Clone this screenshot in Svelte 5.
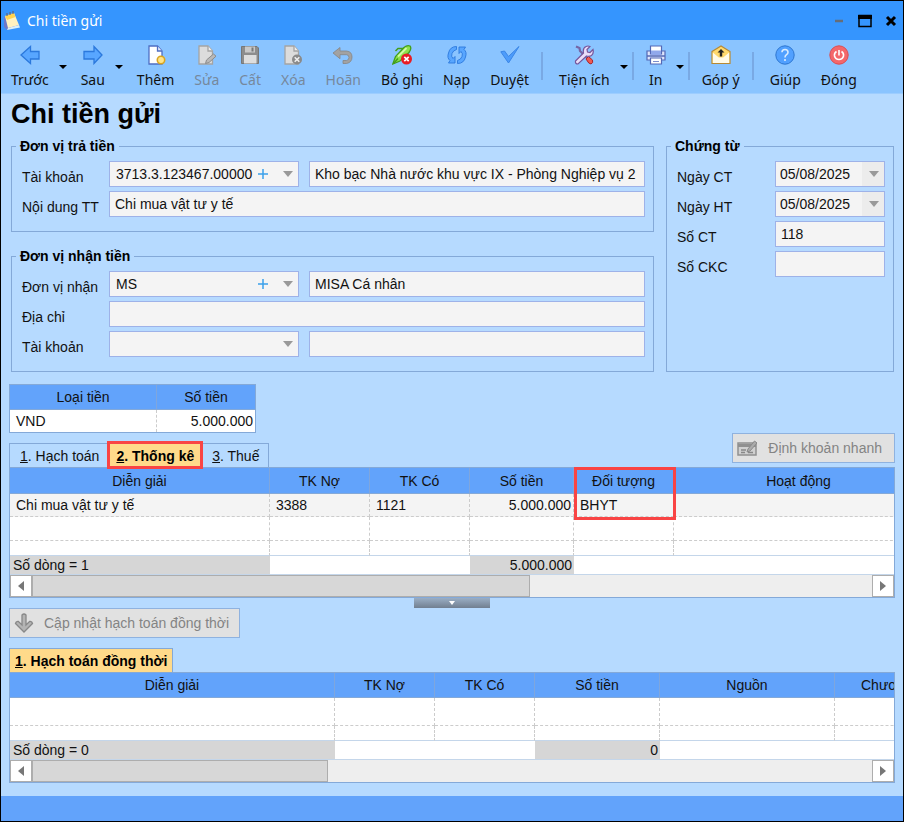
<script>
  const tools = [
    { icon: 'back', label: 'Trước', menu: true },
    { icon: 'forward', label: 'Sau', menu: true },
    { icon: 'add', label: 'Thêm' },
    { icon: 'edit', label: 'Sửa', disabled: true },
    { icon: 'save', label: 'Cất', disabled: true },
    { icon: 'remove', label: 'Xóa', disabled: true },
    { icon: 'undo', label: 'Hoãn', disabled: true },
    { icon: 'unpost', label: 'Bỏ ghi' },
    { icon: 'reload', label: 'Nạp' },
    { icon: 'approve', label: 'Duyệt', split: true },
    { icon: 'utility', label: 'Tiện ích', menu: true, split: true },
    { icon: 'print', label: 'In', menu: true, split: true },
    { icon: 'feedback', label: 'Góp ý', split: true },
    { icon: 'help', label: 'Giúp' },
    { icon: 'close', label: 'Đóng' }
  ];
</script>

{#snippet icon(name)}
  <svg class="icon" viewBox="0 0 20 20" width="20" height="20" aria-hidden="true">
    {#if name === 'back'}
      <path d="M1 10 10.5 1.5V6.500H19V14H10.500V18.500Z" fill="#58a6ff" stroke="#2b78dc" stroke-width="1.300" />
    {:else if name === 'forward'}
      <path d="M19 10 11 1.500V6.500H1V14H11V18.500Z" fill="#58a6ff" stroke="#2b78dc" stroke-width="1.300" />
    {:else if name === 'add'}
      <path d="M3 1h8.500L16 6v13H3Z" fill="#fff" stroke="#4f6fc4" stroke-width="1.300" />
      <path d="M11.500 1v5H16" fill="#e3ebff" stroke="#4f6fc4" stroke-width="1.300" />
      <circle cx="15" cy="15" r="3.700" fill="#ffe58a" stroke="#d9a520" stroke-width="1.600" />
    {:else if name === 'edit'}
      <path d="M2 1h9l4.500 5v13H2Z" fill="#dcdcdc" stroke="#a4a4a4" stroke-width="1.300" />
      <path d="M11 1v5h4.500" fill="#eee" stroke="#a4a4a4" stroke-width="1.300" />
      <path d="m8.500 18.500 1-3.500 7-6 2.500 2.200-7 6.300Z" fill="#b9b9b9" stroke="#8b8b8b" />
    {:else if name === 'save'}
      <path d="M1.500 1.500H17l1.500 1.500V18.500H1.500Z" fill="#8d8d8d" stroke="#777" />
      <path d="M5 1.500h10v6H5Z" fill="#c9c9c9" />
      <path d="M11.500 2.500h2v4h-2Z" fill="#777" />
      <path d="M4 10h12.500v8.500H4Z" fill="#dedede" />
    {:else if name === 'remove'}
      <path d="M2 1h9l4.500 5v13H2Z" fill="#dcdcdc" stroke="#a4a4a4" stroke-width="1.300" />
      <path d="M11 1v5h4.500" fill="#eee" stroke="#a4a4a4" stroke-width="1.300" />
      <circle cx="14" cy="14.500" r="5" fill="#8a8a8a" />
      <path d="m11.700 12.200 4.600 4.600m0-4.600-4.600 4.600" stroke="#eee" stroke-width="1.600" />
    {:else if name === 'undo'}
      <path d="M0 8 7 2.500v3.500h6.500q5.500.5 5.500 6t-5.500 6.500H10v-3h3.500q2.500-.5 2.500-3t-2.500-2.800H7v4Z" fill="#a2a2a2" stroke="#858585" stroke-width=".8" />
    {:else if name === 'unpost'}
      <path d="M.8 19 3.500 11.500 12 2.500Q15 0 18 1 20 3.500 17 7.500L8 16Z" fill="#8ee24c" stroke="#429e1a" stroke-width="1.300" />
      <path d="M11 3.500H6L3.500 6M1.500 18.500 6 13.500" fill="none" stroke="#429e1a" stroke-width="1.500" />
      <path d="m6 11.500 8.500-8.500" stroke="#d0f9a5" stroke-width="1.800" />
      <circle cx="14.500" cy="14" r="5.500" fill="#e81c24" />
      <path d="m12.300 11.800 4.400 4.400m0-4.400-4.400 4.400" stroke="#fff" stroke-width="1.700" />
    {:else if name === 'reload'}
      <path id="half" d="M9.500 1.500Q3 1.500 1.500 8-.2 13 3 15.500L1.500 18H8V11.500L6 13.500Q3.800 11.500 5 8.500 6 5.500 9.500 4.500Z" fill="#58a6ff" stroke="#2b78dc" stroke-width=".9" />
      <path d="M9.500 1.500Q3 1.500 1.500 8-.2 13 3 15.500L1.500 18H8V11.500L6 13.500Q3.800 11.500 5 8.500 6 5.500 9.500 4.500Z" transform="rotate(180 10 10)" fill="#58a6ff" stroke="#2b78dc" stroke-width=".9" />
    {:else if name === 'approve'}
      <path d="M.8 6.800 4.500 6 8.500 11.500 19 1.500 8.500 18Z" fill="#4d9cfb" stroke="#3a86e6" />
    {:else if name === 'utility'}
      <path d="m2 1.500 3.500 1.500.5 3 7 7" fill="none" stroke="#7565a5" stroke-width="2.200" />
      <path d="m12 14 2.500-2.500 4 3.500q1 3-1.500 4-2 .5-5-5Z" fill="#ed5a52" stroke="#a62630" />
      <path d="m1.500 16 8-8Q8.500 3 12 1.500q2-1 4 0l-3 3 .5 2.500 2.500.5 3-3q1 4-1.500 6-2.500 1.500-5 .5L4 19q-3 0-2.500-3Z" fill="#e9ddf8" stroke="#75569c" stroke-width="1.200" />
    {:else if name === 'print'}
      <path d="M1 6h18v9H1Z" fill="#dfe5fb" stroke="#5468b5" stroke-width="1.200" />
      <path d="M4.500 1h11v8h-11Z" fill="#fff" stroke="#5468b5" stroke-width="1.200" />
      <path d="M5 5.500h10V10H5Z" fill="#91a8eb" />
      <path d="M1 11h18" stroke="#5468b5" stroke-width="1.500" />
      <path d="M4.500 13h11v6h-11Z" fill="#fff" stroke="#5468b5" stroke-width="1.200" />
      <path d="M7 16.500h6" stroke="#7d8dcc" />
    {:else if name === 'feedback'}
      <path d="M1 6.500 10 1l9 5.500v12H1Z" fill="#ffd96d" stroke="#b78a35" stroke-width="1.200" />
      <path d="m1.800 7.500 6 5h4.400l6-5v10.400H1.800Z" fill="#fffbe9" />
      <path d="M10 4 6.500 7.500h2.300v4h2.400v-4h2.300Z" fill="#222" />
    {:else if name === 'help'}
      <circle cx="10" cy="10" r="9.200" fill="#51a0ff" stroke="#2e76d0" />
      <path d="M7 7.300Q7 4.500 10 4.500t3 2.700q0 1.500-1.500 2.500T10 12.500m0 1.500v2" fill="none" stroke="#d9ecff" stroke-width="1.600" />
    {:else if name === 'close'}
      <circle cx="10" cy="10" r="9.200" fill="#f4676b" stroke="#dc4b50" />
      <path d="M7.500 6.500q-2.500 1.500-2 4.500Q6.500 14.500 10 14.500t4.500-3.500q.5-3-2-4.500M10 5v5.500" fill="none" stroke="#fff" stroke-width="1.600" />
    {/if}
  </svg>
{/snippet}

{#snippet scroll(size)}
  <div class="scroll">
    <button class="step" type="button" aria-label="Cuộn trái"><svg viewBox="0 0 6 10" width="6" height="10"><path d="M6 0v10L0 5Z" /></svg></button>
    <div class="track"><div class="thumb" style:width="{size}%"></div></div>
    <button class="step" type="button" aria-label="Cuộn phải"><svg viewBox="0 0 6 10" width="6" height="10"><path d="M0 0v10l6-5Z" /></svg></button>
  </div>
{/snippet}

{#snippet combo(id, value, plus)}
  <div class="combo">
    <select {id}><option>{value}</option></select>
    {#if plus}
      <button class="plus" type="button" aria-label="Thêm mới">
        <svg viewBox="0 0 10 10" width="10" height="10"><path d="M5 0v10M0 5h10" stroke="#3aa0ea" stroke-width="1.500" /></svg>
      </button>
    {/if}
    <svg class="arrow" viewBox="0 0 10 6" width="10" height="6"><path d="M0 0h10L5 6Z" /></svg>
  </div>
{/snippet}

<div class="window">
  <header class="titlebar">
    <svg viewBox="0 0 18 20" width="18" height="20" aria-hidden="true">
      <path d="M1 6 10 2l6 14-12 3-3-3Z" fill="#6c78c8" />
      <path d="m2 5 9-3 5 12-11 3Z" fill="#fff2c0" />
      <path d="m2 5 9-3 1.500 4L4 9Z" fill="#ffd351" />
      <path d="m5 17 11-3 1 2.500L4 19Z" fill="#d9f1fa" />
      <path d="M4 5V2m3 2V1m3 2V0" stroke="#5d667c" stroke-width="1.200" />
    </svg>
    <span>Chi tiền gửi</span>
    <div class="controls">
      <button type="button" aria-label="Thu nhỏ"><svg viewBox="0 0 14 14" width="14" height="14"><path d="M3 7h8" stroke="#666d78" stroke-width="2.500" /></svg></button>
      <button type="button" aria-label="Phóng to"><svg viewBox="0 0 14 14" width="14" height="14"><path d="M1 1.500h12v11H1Z" fill="none" stroke="#000" stroke-width="1.500" /><path d="M0 1h14v4H0Z" /></svg></button>
      <button type="button" aria-label="Đóng cửa sổ"><svg viewBox="0 0 14 14" width="14" height="14"><path d="m3 3 8 8m0-8-8 8" stroke="#000" stroke-width="3" /></svg></button>
    </div>
  </header>

  <nav class="toolbar">
    {#each tools as tool}
      <button class="tool" type="button" disabled={tool.disabled}>
        {@render icon(tool.icon)}
        <span>{tool.label}</span>
      </button>
      {#if tool.menu}
        <button class="more" type="button" aria-label="Mở danh sách {tool.label}"><svg viewBox="0 0 8 4" width="8" height="4"><path d="M0 0h8L4 4Z" /></svg></button>
      {/if}
      {#if tool.split}<i class="sep"></i>{/if}
    {/each}
  </nav>

  <main>
    <h1>Chi tiền gửi</h1>

    <div class="forms">
      <div class="parties">
        <fieldset>
          <legend>Đơn vị trả tiền</legend>
          <div class="row">
            <label for="payer">Tài khoản</label>
            {@render combo('payer', '3713.3.123467.00000', true)}
            <input aria-label="Tên kho bạc" value="Kho bạc Nhà nước khu vực IX - Phòng Nghiệp vụ 2" />
          </div>
          <div class="row">
            <label for="content">Nội dung TT</label>
            <input id="content" value="Chi mua vật tư y tế" />
          </div>
        </fieldset>
        <fieldset>
          <legend>Đơn vị nhận tiền</legend>
          <div class="row">
            <label for="payee">Đơn vị nhận</label>
            {@render combo('payee', 'MS', true)}
            <input aria-label="Tên đơn vị nhận" value="MISA Cá nhân" />
          </div>
          <div class="row">
            <label for="address">Địa chỉ</label>
            <input id="address" />
          </div>
          <div class="row">
            <label for="account">Tài khoản</label>
            {@render combo('account', '', false)}
            <input aria-label="Tên ngân hàng" />
          </div>
        </fieldset>
      </div>
      <fieldset class="voucher">
        <legend>Chứng từ</legend>
        <div class="row"><label for="docdate">Ngày CT</label>{@render combo('docdate', '05/08/2025', false)}</div>
        <div class="row"><label for="postdate">Ngày HT</label>{@render combo('postdate', '05/08/2025', false)}</div>
        <div class="row"><label for="docno">Số CT</label><input id="docno" value="118" /></div>
        <div class="row"><label for="ckc">Số CKC</label><input id="ckc" /></div>
      </fieldset>
    </div>

    <div class="grid currency">
      <table>
        <colgroup><col style:width="60%" /><col /></colgroup>
        <thead><tr><th>Loại tiền</th><th>Số tiền</th></tr></thead>
        <tbody><tr><td>VND</td><td class="num">5.000.000</td></tr></tbody>
      </table>
    </div>

    <div class="tabrow">
      <div class="tabs" role="tablist">
        <button role="tab" type="button" aria-selected="false"><u>1</u>. Hạch toán</button>
        <button role="tab" type="button" aria-selected="true" class="active marked"><u>2</u>. Thống kê</button>
        <button role="tab" type="button" aria-selected="false"><u>3</u>. Thuế</button>
      </div>
      <button class="action" type="button" disabled>
        <svg viewBox="0 0 20 18" width="20" height="18" aria-hidden="true">
          <path d="M1 4h18v12H1Z" fill="#d0d0d0" stroke="#909090" stroke-width="1.500" />
          <path d="M1 5h18v3H1Z" fill="#909090" />
          <path d="M4 11h5M4 13.500h4M11 13.500h5" stroke="#888" stroke-width="1.500" />
          <path d="m10 13 1-3 6.500-8L20 4l-7 8Z" fill="#aaa" stroke="#8a8a8a" />
        </svg>
        Định khoản nhanh
      </button>
    </div>

    <div class="grid">
      <div class="clip">
        <table class="entries">
          <colgroup>
            <col style:width="260px" /><col style:width="100px" /><col style:width="100px" /><col style:width="104px" /><col style:width="100px" /><col />
          </colgroup>
          <thead>
            <tr><th>Diễn giải</th><th>TK Nợ</th><th>TK Có</th><th>Số tiền</th><th class="focus">Đối tượng</th><th>Hoạt động</th></tr>
          </thead>
          <tbody>
            <tr class="current"><td>Chi mua vật tư y tế</td><td>3388</td><td>1121</td><td class="num">5.000.000</td><td>BHYT</td><td></td></tr>
            <tr><td></td><td></td><td></td><td></td><td></td><td></td></tr>
            <tr class="short"><td></td><td></td><td></td><td></td><td></td><td></td></tr>
          </tbody>
          <tfoot>
            <tr><td class="sum">Số dòng = 1</td><td colspan="2"></td><td class="sum num">5.000.000</td><td colspan="2"></td></tr>
          </tfoot>
        </table>
      </div>
      {@render scroll(59.3)}
    </div>

    <button class="splitter" type="button" aria-label="Thu gọn"><svg viewBox="0 0 6 4" width="6" height="4"><path d="M0 0h6L3 4Z" fill="#fff" /></svg></button>

    <button class="action update" type="button" disabled>
      <svg viewBox="0 0 20 20" width="20" height="20" aria-hidden="true">
        <path d="M8 2q2-2 4 0v10l3.500-3.500Q18 8 18.500 10.500L10 19 1.500 10.500Q2 8 4.500 8.500L8 12Z" fill="#b4b4b4" stroke="#888" stroke-width="1.300" />
      </svg>
      Cập nhật hạch toán đồng thời
    </button>

    <div class="tabs" role="tablist">
      <button role="tab" type="button" aria-selected="true" class="active"><u>1</u>. Hạch toán đồng thời</button>
    </div>

    <div class="grid second">
      <div class="clip">
        <table class="wide">
          <colgroup>
            <col style:width="325px" /><col style:width="100px" /><col style:width="100px" /><col style:width="125px" /><col style:width="175px" /><col style:width="104px" />
          </colgroup>
          <thead>
            <tr><th>Diễn giải</th><th>TK Nợ</th><th>TK Có</th><th>Số tiền</th><th>Nguồn</th><th>Chương</th></tr>
          </thead>
          <tbody>
            <tr class="tall"><td></td><td></td><td></td><td></td><td></td><td></td></tr>
            <tr class="short"><td></td><td></td><td></td><td></td><td></td><td></td></tr>
          </tbody>
          <tfoot>
            <tr><td class="sum">Số dòng = 0</td><td colspan="2"></td><td class="sum num">0</td><td colspan="2"></td></tr>
          </tfoot>
        </table>
      </div>
      {@render scroll(35.2)}
    </div>
  </main>

  <footer></footer>
</div>

<style>
  :global(body) { background: #b6daff; }
  .window, .window * { box-sizing: border-box; }
  .window {
    display: flex;
    flex-direction: column;
    min-height: 100vh;
    border: 1px solid #000;
    background: #b6daff;
    color: #111;
    font: 14px/16px "Liberation Sans", Arial, sans-serif;
  }
  button, input, select { font: inherit; color: inherit; margin: 0; border-radius: 0; }
  button { padding: 0; border: 0; background: none; }

  .titlebar {
    display: flex;
    align-items: center;
    gap: 6px;
    height: 39px;
    padding: 0 4px 0 2px;
    background: #3595fe;
    color: #fff;
    font: 14px/20px "Noto Sans", "Open Sans", sans-serif;
  }
  .controls { display: flex; gap: 10px; margin-left: auto; }
  .controls button { display: flex; width: 16px; justify-content: center; }

  .toolbar {
    display: flex;
    height: 54px;
    background: #8ac4ff;
    border-bottom: 1px solid #9dcdff;
    font: 14px/18px "Noto Sans", "Open Sans", sans-serif;
  }
  .tool {
    display: flex;
    flex-direction: column;
    align-items: center;
    gap: 6px;
    padding: 5px 10px 0;
    white-space: nowrap;
  }
  .tool:disabled { color: #76889c; }
  .icon { display: block; }
  .more { width: 12px; text-align: left; }
  .more svg { display: block; }
  .sep { width: 2px; height: 28px; margin: 12px 6px 0 2px; background: #79a9e4; }
  .more + .sep { margin: 12px 2px 0 0; }

  main { flex: 1; padding: 0 8px 12px; }
  h1 { margin: 0; padding: 0 2px 4px; font-size: 27px; line-height: 40px; font-weight: bold; color: #000; }

  .forms { display: grid; grid-template-columns: minmax(0, 1fr) 228px; gap: 12px; padding: 0 1px 0 2px; }
  .parties { display: flex; flex-direction: column; gap: 16px; }
  fieldset {
    display: flex;
    flex-direction: column;
    gap: 4px;
    min-width: 0;
    margin: 0;
    padding: 7px 8px 14px 10px;
    border: 1px solid #84a9d8;
  }
  legend { margin-left: -6px; padding: 0 4px; line-height: 16px; font-weight: bold; color: #000; }
  .row { display: flex; align-items: center; gap: 10px; }
  label { flex: 0 0 77px; padding-top: 5px; white-space: nowrap; }
  .voucher label { flex-basis: 88px; }
  input, select {
    flex: 1;
    width: 100%;
    min-width: 0;
    height: 26px;
    padding: 0 5px 1px;
    border: 1px solid #9eb2e8;
    background: #f4f4f4;
    appearance: none;
    outline: 0;
  }
  .combo { position: relative; flex: 0 0 190px; display: flex; }
  .voucher .combo { flex: 1; }
  .combo select { padding-left: 6px; }
  .voucher select { padding-left: 4px; background: linear-gradient(90deg, #f4f4f4 80%, #ececec 80%); }
  .arrow { position: absolute; right: 6px; top: 10px; fill: #999; pointer-events: none; }
  .plus { position: absolute; right: 31px; top: 8px; display: flex; }

  .grid { border: 1px solid #84a9d8; background: #fff; }
  .clip { overflow-x: clip; }
  table { width: 100%; table-layout: fixed; border-collapse: separate; border-spacing: 0; }
  .entries { width: 913px; }
  .wide { width: 929px; }
  th {
    height: 26px;
    padding: 0;
    border-right: 1px solid #7fa6dd;
    border-bottom: 1px solid #84a9d8;
    background: #62a3fb;
    font-weight: normal;
  }
  td {
    height: 24px;
    padding: 0 5px 0 6px;
    border-right: 1px dashed #ccc;
    border-bottom: 1px dashed #ccc;
    white-space: nowrap;
  }
  th:last-child, td:last-child { border-right: 0; }
  .num { text-align: right; padding-right: 2px; }
  .current td { height: 23px; background: #f4f4f4; }
  .tall td { height: 28px; }
  .short td { height: 15px; border-bottom: 1px solid #c4d6ea; }
  tfoot td { height: 19px; border-right: 0; border-bottom: 1px solid #c4d6ea; padding-left: 3px; }
  .sum { background: #d6d6d6; }
  .second th { height: 25px; }

  .currency { width: 247px; margin-top: 12px; }
  .currency th { height: 25px; }
  .currency td { height: 22px; border-bottom: 0; }

  .tabrow { display: flex; align-items: flex-start; justify-content: space-between; }
  .tabs { display: flex; width: max-content; border: 1px solid #84a9d8; border-bottom: 0; }
  .tabrow .tabs { margin-top: 10px; }
  .tabs button { height: 23px; padding: 0 9px 0 10px; white-space: nowrap; }
  .tabs .active { padding: 0 5px; background: #ffda8a; font-weight: bold; color: #000; }
  .tabs .marked { position: relative; padding: 0 8px; }
  .marked::after, .focus::after { content: ""; position: absolute; box-sizing: border-box; border: 3px solid #f94444; }
  .marked::after { inset: -3px -1px -2px; z-index: 1; }
  .focus { position: relative; }
  .focus::after { left: 0; right: -3px; top: -1px; height: 53px; }

  .action {
    display: flex;
    align-items: center;
    gap: 11px;
    height: 30px;
    padding: 0 12px 0 4px;
    border: 1px solid #8fb2df;
    background: #e1e1e1;
    color: #848484;
  }
  .splitter {
    display: flex;
    align-items: center;
    justify-content: center;
    width: 76px;
    height: 10px;
    margin: 0 auto;
    background: linear-gradient(#9aaec5, #717f90);
  }
  .update { gap: 10px; margin-bottom: 10px; padding-right: 10px; }

  .scroll { display: flex; height: 22px; background: #eee; }
  .step { display: flex; align-items: center; justify-content: center; width: 22px; border: 1px solid #adadad; background: #fff; }
  .step svg { fill: #777; }
  .track { flex: 1; }
  .thumb { height: 100%; border: 1px solid #adadad; background: #d7d7d7; }

  footer { height: 25px; background: #62a3fb; }
</style>
